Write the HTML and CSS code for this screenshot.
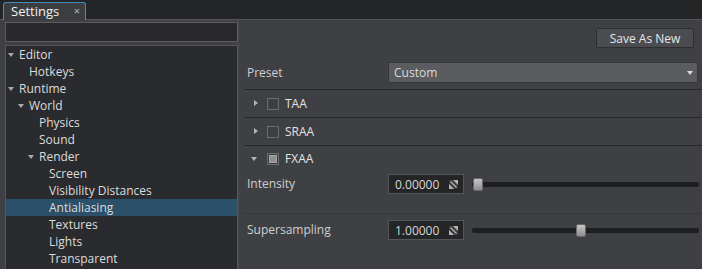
FILE: index.html
```html
<!DOCTYPE html>
<html lang="en">
<head>
    <meta charset="UTF-8">
    <title>Settings</title>
    <link rel="stylesheet" href="styles.css">
</head>
<body>

<div class="tabbar">
    <div class="tab">Settings <span class="tab-close">×</span></div>
</div>

<div class="main">
    <!-- left: search + tree -->
    <div class="sidebar">
        <div class="search"></div>
        <ul class="tree">
            <li class="lvl0 open">Editor</li>
            <li class="lvl1">Hotkeys</li>
            <li class="lvl0 open">Runtime</li>
            <li class="lvl1 open">World</li>
            <li class="lvl2">Physics</li>
            <li class="lvl2">Sound</li>
            <li class="lvl2 open">Render</li>
            <li class="lvl3">Screen</li>
            <li class="lvl3">Visibility Distances</li>
            <li class="lvl3 selected">Antialiasing</li>
            <li class="lvl3">Textures</li>
            <li class="lvl3">Lights</li>
            <li class="lvl3">Transparent</li>
        </ul>
    </div>

    <!-- right: settings -->
    <div class="content">
        <div class="toolbar">
            <button class="btn">Save As New</button>
        </div>

        <div class="row preset">
            <span class="label">Preset</span>
            <div class="select">Custom <span class="select-arrow"></span></div>
        </div>

        <div class="group"><span class="arrow right"></span><span class="check"></span>TAA</div>
        <div class="group"><span class="arrow right"></span><span class="check"></span>SRAA</div>
        <div class="group open"><span class="arrow down"></span><span class="check checked"></span>FXAA</div>

        <div class="row param">
            <span class="label">Intensity</span>
            <div class="number">0.00000
                <svg class="spin" width="9" height="9" viewBox="0 0 9 9">
                    <rect width="9" height="9" fill="#b4b4b4"/>
                    <path d="M0 0 H4 L9 5 V9 H5 L0 4 Z" fill="#3a3b3d"/>
                    <path d="M1.5 1.5 L7.5 7.5" stroke="#b4b4b4" stroke-width="1.2"/>
                </svg>
            </div>
            <div class="slider"><span class="knob" style="left: 0%"></span></div>
        </div>

        <div class="row param last">
            <span class="label">Supersampling</span>
            <div class="number">1.00000
                <svg class="spin" width="9" height="9" viewBox="0 0 9 9">
                    <rect width="9" height="9" fill="#b4b4b4"/>
                    <path d="M0 0 H4 L9 5 V9 H5 L0 4 Z" fill="#3a3b3d"/>
                    <path d="M1.5 1.5 L7.5 7.5" stroke="#b4b4b4" stroke-width="1.2"/>
                </svg>
            </div>
            <div class="slider"><span class="knob" style="left: 45.5%"></span></div>
        </div>
    </div>
</div>

</body>
</html>
```
FILE: styles.css
```css
body {
    margin: 0;
    padding: 0;
    font-family: "Open Sans", "Noto Sans", sans-serif;
    font-size: 12px;
    color: #d6d6d6;
    background-color: #3f4044;
    width: 702px;
    height: 269px;
    overflow: hidden;
}

.tabbar {
    height: 20px;
    background-color: #242527;
    padding-left: 3px;
    display: flex;
    align-items: flex-end;
    box-sizing: border-box;
    border-bottom: 1px solid #55565a;
}

.tab {
    width: 83px;
    height: 18px;
    box-sizing: border-box;
    background-color: #3c3d41;
    border-top: 1px solid #3f8fc0;
    border-left: 1px solid #3f8fc0;
    border-right: 1px solid #3f8fc0;
    border-radius: 3px 3px 0 0;
    padding-left: 7px;
    font-size: 13px;
    line-height: 16px;
    color: #f0f0f0;
    position: relative;
    top: 1px;
}

.tab-close {
    position: absolute;
    right: 5px;
    top: 0;
    font-size: 11px;
    color: #b8b8b8;
}

.main {
    display: flex;
    height: 249px;
}

.sidebar {
    width: 233px;
    padding: 2px 0 0 5px;
    flex-shrink: 0;
}

.search {
    height: 20px;
    box-sizing: border-box;
    background-color: #29292c;
    border: 1px solid #5c5d61;
    margin-bottom: 3px;
}

.tree {
    list-style: none;
    margin: 0;
    padding: 0;
    background-color: #2a2b2e;
    border: 1px solid #55565a;
    border-bottom: none;
    height: 230px;
}

.tree li {
    height: 17px;
    line-height: 17px;
    position: relative;
    white-space: nowrap;
    color: #dcdcdc;
}

.tree .lvl0 { padding-left: 13px; }
.tree .lvl1 { padding-left: 23px; }
.tree .lvl2 { padding-left: 33px; }
.tree .lvl3 { padding-left: 43px; }

.tree li.open::before {
    content: "";
    position: absolute;
    top: 7px;
    margin-left: -11px;
    border-left: 3.5px solid transparent;
    border-right: 3.5px solid transparent;
    border-top: 4px solid #a9a9a9;
}

.tree li.selected {
    background-color: #2b5069;
}

.content {
    flex: 1;
    padding-left: 5px;
    border-left: 1px solid #4a4b4f;
}

.toolbar {
    display: flex;
    justify-content: flex-end;
    padding: 8px 8px 0 0;
    height: 28px;
    box-sizing: border-box;
}

.btn {
    width: 98px;
    height: 20px;
    background-color: #4b4c51;
    border: 1px solid #2d2e30;
    border-radius: 2px;
    color: #e6e6e6;
    font-family: inherit;
    font-size: 12px;
    padding: 0;
}

.row {
    display: flex;
    align-items: center;
}

.label {
    width: 141px;
    padding-left: 3px;
    color: #cfcfcf;
}

.preset {
    height: 42px;
    padding-top: 14px;
    box-sizing: border-box;
    border-bottom: 1px solid #27282a;
    align-items: flex-start;
}

.preset .label {
    line-height: 21px;
}

.select {
    flex: 1;
    margin-right: 4px;
    height: 21px;
    box-sizing: border-box;
    background-color: #5b5c60;
    border: 1px solid #36373a;
    border-radius: 2px;
    line-height: 19px;
    padding-left: 5px;
    color: #dadada;
    position: relative;
}

.select-arrow {
    position: absolute;
    right: 4px;
    top: 8px;
    border-left: 3.5px solid transparent;
    border-right: 3.5px solid transparent;
    border-top: 4px solid #dcdcdc;
}

.group {
    height: 28px;
    box-sizing: border-box;
    border-bottom: 1px solid #27282a;
    display: flex;
    align-items: center;
    padding-left: 9px;
    color: #e2e2e2;
}

.group.open {
    height: 25px;
    border-bottom: none;
}

.arrow {
    width: 7px;
    height: 7px;
    position: relative;
    margin-right: 7px;
}

.arrow.right::before {
    content: "";
    position: absolute;
    left: 1px;
    top: 0;
    border-top: 3.5px solid transparent;
    border-bottom: 3.5px solid transparent;
    border-left: 4px solid #b4b4b4;
}

.arrow.down::before {
    content: "";
    position: absolute;
    left: -2px;
    top: 2px;
    border-left: 3.5px solid transparent;
    border-right: 3.5px solid transparent;
    border-top: 4px solid #b4b4b4;
}

.check {
    width: 12px;
    height: 12px;
    box-sizing: border-box;
    border: 1px solid #6b6c70;
    background-color: #3d3e42;
    margin-right: 6px;
    display: flex;
    align-items: center;
    justify-content: center;
}

.check.checked::after {
    content: "";
    width: 6px;
    height: 6px;
    background-color: #8f9093;
    border: 1px solid #a4a5a7;
}

.param {
    height: 42px;
    align-items: flex-start;
    padding-top: 3px;
    box-sizing: border-box;
}

.param .label {
    line-height: 20px;
}

.param.last {
    border-top: 1px solid #36373a;
    height: 33px;
    padding-top: 6px;
}

.number {
    width: 76px;
    height: 20px;
    box-sizing: border-box;
    background-color: #242527;
    border: 1px solid #55565a;
    display: flex;
    align-items: center;
    padding: 0 5px 0 6px;
    color: #d8d8d8;
    justify-content: space-between;
}

.slider {
    flex: 1;
    height: 5px;
    margin: 8px 3px 0 8px;
    background-color: #1d1e1f;
    border-radius: 2px;
    position: relative;
}

.knob {
    position: absolute;
    top: -4px;
    width: 10px;
    height: 13px;
    box-sizing: border-box;
    border-radius: 2px;
    background: linear-gradient(#c6c6c6, #8e8e8e);
    border: 1px solid #6a6a6a;
    margin-left: 1px;
}
```
